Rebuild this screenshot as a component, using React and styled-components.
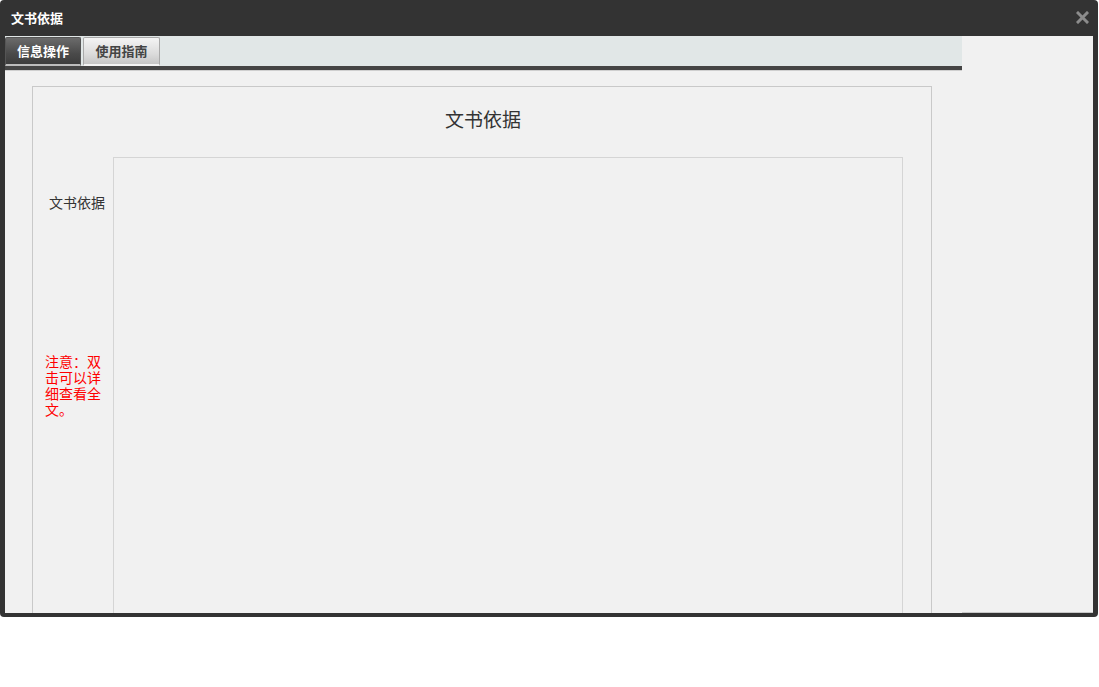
import React from 'react';
import styled, { createGlobalStyle } from 'styled-components';

const GlobalStyle = createGlobalStyle`
  html, body {
    margin: 0;
    padding: 0;
    background: #fff;
  }
  body {
    font-family: "Liberation Sans", Arial, "Noto Sans CJK SC", sans-serif;
  }
`;

const tabs = ['信息操作', '使用指南'];

const App = () => {
  return (
    <>
      <GlobalStyle />
      <Window>
        <TitleBar>
          <Title>文书依据</Title>
          <CloseButton aria-label="close">
            <svg width="13" height="13" viewBox="0 0 13 13">
              <path d="M2 2 L11 11 M11 2 L2 11" stroke="#8c8c8c" strokeWidth="3" strokeLinecap="square" />
            </svg>
          </CloseButton>
        </TitleBar>
        <Body>
          <Frame>
            <TabBar>
              {tabs.map((t, i) => (
                <Tab key={t} active={i === 0}>{t}</Tab>
              ))}
            </TabBar>
            <Rule />
            <Content>
              <FormBox>
                <FormTitle>文书依据</FormTitle>
                <FieldRow>
                  <LabelCol>
                    <Label>文书依据</Label>
                    <Note>注意：双击可以详细查看全文。</Note>
                  </LabelCol>
                  <TextArea readOnly />
                </FieldRow>
              </FormBox>
            </Content>
          </Frame>
          <Side />
        </Body>
      </Window>
    </>
  );
};

export default App;

const Window = styled.div`
  width: 1098px;
  height: 617px;
  background: #333333;
  border-radius: 4px;
  display: flex;
  flex-direction: column;
  box-sizing: border-box;
  padding: 0 5px 4px 5px;
  overflow: hidden;
`;

const TitleBar = styled.div`
  height: 36px;
  display: flex;
  align-items: center;
  justify-content: space-between;
  padding: 0 4px 2px 6px;
  box-sizing: border-box;
`;

const Title = styled.div`
  color: #fff;
  font-size: 13px;
  font-weight: bold;
  font-family: "Noto Sans CJK SC", sans-serif;
`;

const CloseButton = styled.div`
  width: 13px;
  height: 13px;
  display: flex;
  cursor: pointer;
`;

const Body = styled.div`
  flex: 1;
  display: flex;
  min-height: 0;
`;

const Frame = styled.div`
  width: 957px;
  display: flex;
  flex-direction: column;
  background: #f1f1f1;
  overflow: hidden;
`;

const Side = styled.div`
  flex: 1;
  background: #f1f1f1;
  border-bottom: 1px solid #c8c8c8;
`;

const TabBar = styled.div`
  height: 30px;
  background: #e1e7e7;
  display: flex;
  align-items: flex-end;
  gap: 2px;
  box-sizing: border-box;
  padding-top: 1px;
`;

const Tab = styled.div`
  width: ${(p) => (p.active ? '76px' : '77px')};
  height: 29px;
  box-sizing: border-box;
  display: flex;
  align-items: center;
  justify-content: center;
  padding-bottom: 1px;
  font-size: 13px;
  font-weight: bold;
  font-family: "Noto Sans CJK SC", sans-serif;
  border-radius: 2px 2px 0 0;
  color: ${(p) => (p.active ? '#fff' : '#444')};
  background: ${(p) =>
    p.active
      ? 'linear-gradient(#6b6b6b, #4a4a4a 60%, #3c3c3c)'
      : 'linear-gradient(#f4f4f4, #dcdcdc 60%, #c6c6c6)'};
  border: 1px solid ${(p) => (p.active ? '#555' : '#a9a9a9')};
  border-bottom: 2px solid ${(p) => (p.active ? '#bcbcbc' : '#f4f4f4')};
`;

const Rule = styled.div`
  height: 4px;
  background: #454545;
  border-bottom: 1px solid #cfcfcf;
`;

const Content = styled.div`
  flex: 1;
  padding: 15px 0 0 27px;
  overflow: hidden;
`;

const FormBox = styled.div`
  width: 900px;
  height: 700px;
  box-sizing: border-box;
  border: 1px solid #c9c9c9;
`;

const FormTitle = styled.div`
  height: 70px;
  box-sizing: border-box;
  padding: 21px 0 0 2px;
  text-align: center;
  font-size: 19px;
  line-height: 22px;
  color: #333;
  font-family: "Noto Sans CJK SC", sans-serif;
`;

const FieldRow = styled.div`
  display: grid;
  grid-template-columns: 80px 790px;
`;

const LabelCol = styled.div`
  display: flex;
  flex-direction: column;
  align-items: flex-end;
  padding: 35px 8px 0 0;
`;

const Label = styled.div`
  font-size: 14px;
  line-height: 20px;
  color: #333;
  font-family: "Noto Sans CJK SC", sans-serif;
`;

const Note = styled.div`
  margin-top: 141px;
  width: 58px;
  margin-right: 2px;
  font-size: 14px;
  line-height: 16px;
  color: #ff0000;
  font-family: "Noto Sans CJK SC", sans-serif;
  word-break: break-all;
`;

const TextArea = styled.textarea`
  height: 520px;
  box-sizing: border-box;
  border: 1px solid #d5d5d5;
  background: #f1f1f1;
  resize: none;
  outline: none;
  padding: 4px;
`;
